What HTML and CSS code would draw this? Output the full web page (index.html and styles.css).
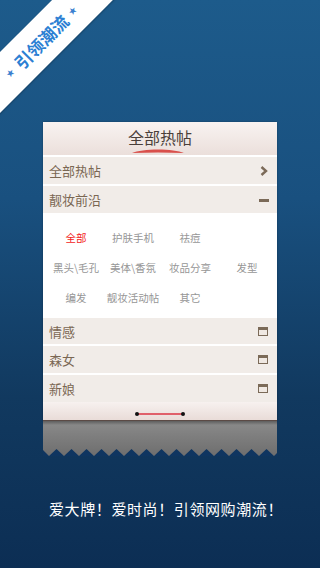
FILE: index.html
```html
<!DOCTYPE html>
<html lang="zh">
<head>
<meta charset="utf-8">
<link rel="stylesheet" href="styles.css">
</head>
<body>
<div class="screen">
  <div class="ribbon">
    <span class="star">★</span>
    <span class="ribbon-text">引领潮流</span>
    <span class="star">★</span>
  </div>

  <div class="card">
    <div class="card-head">
      <span class="card-title">全部热帖</span>
      <svg class="title-arc" width="52" height="5" viewBox="0 0 52 5"><path d="M0 5 C10 0.3 42 0.3 52 5 Q26 3.8 0 5Z" fill="#d9504c"/></svg>
    </div>
    <div class="row">
      <span class="row-label">全部热帖</span>
      <svg class="ico" width="8" height="10" viewBox="0 0 8 10"><path d="M1.5 1 L6 5 L1.5 9" fill="none" stroke="#7b6a58" stroke-width="2.4"/></svg>
    </div>
    <div class="row row-open">
      <span class="row-label">靓妆前沿</span>
      <span class="minus"></span>
    </div>
    <div class="tags">
      <span class="tag tag-on">全部</span>
      <span class="tag">护肤手机</span>
      <span class="tag">祛痘</span>
      <span class="tag"></span>
      <span class="tag">黑头\毛孔</span>
      <span class="tag">美体\香氛</span>
      <span class="tag">妆品分享</span>
      <span class="tag">发型</span>
      <span class="tag">编发</span>
      <span class="tag">靓妆活动帖</span>
      <span class="tag">其它</span>
    </div>
    <div class="row">
      <span class="row-label">情感</span>
      <span class="win"></span>
    </div>
    <div class="row">
      <span class="row-label">森女</span>
      <span class="win"></span>
    </div>
    <div class="row">
      <span class="row-label">新娘</span>
      <span class="win"></span>
    </div>
    <div class="card-foot">
      <span class="foot-line"></span>
    </div>
  </div>
  <div class="tear">
    <svg class="teeth" width="234" height="8" viewBox="0 0 234 8" preserveAspectRatio="none">
      <path d="M0 8 L0 2 L6 8 L13.5 1 L21 8 L28.5 1 L36 8 L43.5 1 L51 8 L58.5 1 L66 8 L73.5 1 L81 8 L88.5 1 L96 8 L103.5 1 L111 8 L118.5 1 L126 8 L133.5 1 L141 8 L148.5 1 L156 8 L163.5 1 L171 8 L178.5 1 L186 8 L193.5 1 L201 8 L208.5 1 L216 8 L223.5 1 L231 8 L234 5 L234 8 Z" fill="#0f3560"/>
    </svg>
  </div>

  <p class="slogan">爱大牌！爱时尚！引领网购潮流！</p>
</div>
</body>
</html>
```

FILE: styles.css
```css
* { box-sizing: border-box; margin: 0; padding: 0; }
html, body { width: 320px; height: 568px; overflow: hidden; }
body {
  font-family: "Noto Sans CJK SC", "Noto Sans", sans-serif;
}
.screen {
  position: relative;
  width: 320px;
  height: 568px;
  background: linear-gradient(to bottom, #1d5b8b 0%, #19507f 35%, #11395f 70%, #0c2e54 100%);
  padding-top: 122px;
  display: flex;
  flex-direction: column;
  align-items: center;
  overflow: hidden;
}
.ribbon {
  position: absolute;
  left: -59px;
  top: 19.5px;
  width: 200px;
  height: 43px;
  background: #fff;
  transform: rotate(-45deg);
  display: flex;
  align-items: center;
  justify-content: center;
  gap: 6px;
  box-shadow: 0 1px 2px rgba(0,0,0,0.25);
}
.ribbon-text {
  color: #2b7fd3;
  font-size: 17px;
  font-weight: bold;
  line-height: 1;
}
.star {
  color: #3a80cf;
  font-size: 8px;
  line-height: 1;
}
.card {
  width: 234px;
  background: #ffffff;
  display: flex;
  flex-direction: column;
  box-shadow: 0 0 2px rgba(0,0,0,0.3);
}
.card-head {
  height: 33px;
  background: linear-gradient(to bottom, #f8f3f1, #ebdfdb);
  display: flex;
  flex-direction: column;
  align-items: center;
  padding-top: 5px;
  margin-bottom: 2px;
}
.card-title {
  font-size: 16px;
  line-height: 20px;
  color: #4a3f3a;
}
.title-arc { display: block; margin-top: 1px; margin-left: -4px; }
.row {
  height: 27px;
  background: #f1ece8;
  display: flex;
  align-items: center;
  justify-content: space-between;
  padding: 0 8px 0 6px;
  margin-bottom: 2px;
}
.row-open { margin-bottom: 0; }
.row-label {
  font-size: 13px;
  color: #7a6753;
  line-height: 1;
}
.ico { display: block; margin-right: 1px; }
.minus {
  width: 10px;
  height: 3px;
  background: #7b6a58;
  margin-top: 1px;
}
.win {
  width: 10px;
  height: 9px;
  border: 1.5px solid #7b6a58;
  border-top-width: 3.5px;
  background: #efe8e2;
  margin-right: 1px;
}
.tags {
  display: grid;
  grid-template-columns: repeat(4, 57px);
  grid-auto-rows: 30px;
  padding: 9px 0 5px 4.5px;
  background: #fff;
}
.tag {
  font-size: 10.5px;
  color: #969696;
  display: flex;
  align-items: center;
  justify-content: center;
  white-space: nowrap;
}
.tag-on { color: #f21b1b; }
.tags + .row { border-top: 1px solid #fff; }
.card-foot {
  height: 19px;
  background: linear-gradient(to bottom, #f7f1ef, #e9dcd8);
  border-bottom: 1px solid #5b4a45;
  display: flex;
  justify-content: center;
  align-items: flex-end;
  padding-bottom: 5px;
  margin-top: -2px;
}
.foot-line {
  position: relative;
  width: 46px;
  height: 2px;
  background: #e0606a;
}
.foot-line::before, .foot-line::after {
  content: "";
  position: absolute;
  top: -1px;
  width: 4px;
  height: 4px;
  border-radius: 50%;
  background: #111;
}
.foot-line::before { left: -2px; }
.foot-line::after { right: -2px; }
.tear {
  width: 234px;
  height: 35px;
  background: linear-gradient(to bottom, #5e5e5e 0px, #888 4px, #7f7f7f 40%, #6e6e6e 100%);
  display: flex;
  align-items: flex-end;
}
.teeth { display: block; }
.slogan {
  margin-top: 43px;
  padding-left: 12px;
  color: #ffffff;
  font-size: 15px;
  line-height: 20px;
  text-align: center;
  letter-spacing: 0.6px;
}
```
